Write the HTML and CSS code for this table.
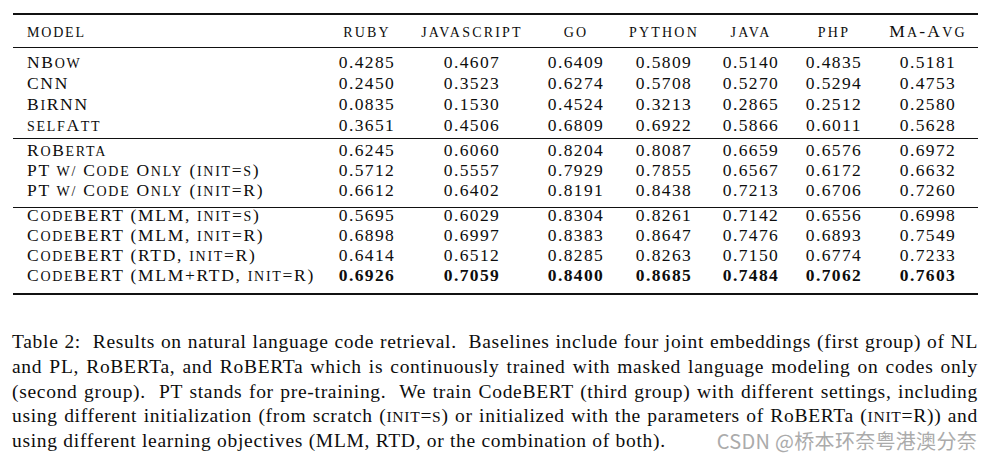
FILE: index.html
```html
<!DOCTYPE html>
<html lang="en">
<head>
<meta charset="utf-8">
<title>Table 2</title>
<link rel="stylesheet" href="styles.css">
</head>
<body>
<div class="page">
  <div class="table">
    <div class="row head">
      <div class="label"><span class="sc">model</span></div>
      <div class="num"><span class="sc">ruby</span></div>
      <div class="num"><span class="sc">javascript</span></div>
      <div class="num"><span class="sc">go</span></div>
      <div class="num"><span class="sc">python</span></div>
      <div class="num"><span class="sc">java</span></div>
      <div class="num"><span class="sc">php</span></div>
      <div class="num">M<span class="sc">a</span>-A<span class="sc">vg</span></div>
    </div>
    <div class="group g1">
      <div class="row">
        <div class="label">NB<span class="sc">ow</span></div>
        <div class="num">0.4285</div><div class="num">0.4607</div><div class="num">0.6409</div><div class="num">0.5809</div><div class="num">0.5140</div><div class="num">0.4835</div><div class="num">0.5181</div>
      </div>
      <div class="row">
        <div class="label">CNN</div>
        <div class="num">0.2450</div><div class="num">0.3523</div><div class="num">0.6274</div><div class="num">0.5708</div><div class="num">0.5270</div><div class="num">0.5294</div><div class="num">0.4753</div>
      </div>
      <div class="row">
        <div class="label">B<span class="sc">i</span>RNN</div>
        <div class="num">0.0835</div><div class="num">0.1530</div><div class="num">0.4524</div><div class="num">0.3213</div><div class="num">0.2865</div><div class="num">0.2512</div><div class="num">0.2580</div>
      </div>
      <div class="row">
        <div class="label"><span class="sc">self</span>A<span class="sc">tt</span></div>
        <div class="num">0.3651</div><div class="num">0.4506</div><div class="num">0.6809</div><div class="num">0.6922</div><div class="num">0.5866</div><div class="num">0.6011</div><div class="num">0.5628</div>
      </div>
    </div>
    <div class="group g2">
      <div class="row">
        <div class="label">R<span class="sc">o</span>B<span class="sc">erta</span></div>
        <div class="num">0.6245</div><div class="num">0.6060</div><div class="num">0.8204</div><div class="num">0.8087</div><div class="num">0.6659</div><div class="num">0.6576</div><div class="num">0.6972</div>
      </div>
      <div class="row">
        <div class="label">PT <span class="sc">w/</span> C<span class="sc">ode</span> O<span class="sc">nly</span> (<span class="sc">init</span>=<span class="sc">s</span>)</div>
        <div class="num">0.5712</div><div class="num">0.5557</div><div class="num">0.7929</div><div class="num">0.7855</div><div class="num">0.6567</div><div class="num">0.6172</div><div class="num">0.6632</div>
      </div>
      <div class="row">
        <div class="label">PT <span class="sc">w/</span> C<span class="sc">ode</span> O<span class="sc">nly</span> (<span class="sc">init</span>=R)</div>
        <div class="num">0.6612</div><div class="num">0.6402</div><div class="num">0.8191</div><div class="num">0.8438</div><div class="num">0.7213</div><div class="num">0.6706</div><div class="num">0.7260</div>
      </div>
    </div>
    <div class="group g3">
      <div class="row">
        <div class="label">C<span class="sc">ode</span>BERT (MLM, <span class="sc">init</span>=<span class="sc">s</span>)</div>
        <div class="num">0.5695</div><div class="num">0.6029</div><div class="num">0.8304</div><div class="num">0.8261</div><div class="num">0.7142</div><div class="num">0.6556</div><div class="num">0.6998</div>
      </div>
      <div class="row">
        <div class="label">C<span class="sc">ode</span>BERT (MLM, <span class="sc">init</span>=R)</div>
        <div class="num">0.6898</div><div class="num">0.6997</div><div class="num">0.8383</div><div class="num">0.8647</div><div class="num">0.7476</div><div class="num">0.6893</div><div class="num">0.7549</div>
      </div>
      <div class="row">
        <div class="label">C<span class="sc">ode</span>BERT (RTD, <span class="sc">init</span>=R)</div>
        <div class="num">0.6414</div><div class="num">0.6512</div><div class="num">0.8285</div><div class="num">0.8263</div><div class="num">0.7150</div><div class="num">0.6774</div><div class="num">0.7233</div>
      </div>
      <div class="row best">
        <div class="label">C<span class="sc">ode</span>BERT (MLM+RTD, <span class="sc">init</span>=R)</div>
        <div class="num">0.6926</div><div class="num">0.7059</div><div class="num">0.8400</div><div class="num">0.8685</div><div class="num">0.7484</div><div class="num">0.7062</div><div class="num">0.7603</div>
      </div>
    </div>
  </div>

  <p class="caption">
    <span class="line">Table 2:&nbsp; Results on natural language code retrieval.&nbsp; Baselines include four joint embeddings (first group) of NL</span>
    <span class="line">and PL, RoBERTa, and RoBERTa which is continuously trained with masked language modeling on codes only</span>
    <span class="line">(second group).&nbsp; PT stands for pre-training.&nbsp; We train CodeBERT (third group) with different settings, including</span>
    <span class="line">using different initialization (from scratch (<span class="sc">init</span>=<span class="sc">s</span>) or initialized with the parameters of RoBERTa (<span class="sc">init</span>=R)) and</span>
    <span class="line last">using different learning objectives (MLM, RTD, or the combination of both).</span>
  </p>

  <div class="watermark">CSDN @桥本环奈粤港澳分奈</div>
</div>
</body>
</html>
```

FILE: styles.css
```css
html, body {
  margin: 0;
  padding: 0;
  background: #ffffff;
}

body {
  font-family: "Liberation Serif", "Times New Roman", serif;
  color: #0d0d0d;
}

.page {
  position: relative;
  width: 992px;
  height: 460px;
  overflow: hidden;
}

.table {
  margin: 13px 0 0 13px;
  width: 965px;
  border-top: 2px solid #111;
  border-bottom: 2px solid #111;
  font-size: 17.5px;
  letter-spacing: 1.4px;
}

.row {
  display: grid;
  grid-template-columns: 323px 62px 148px 60px 116px 58px 108px 80px;
  line-height: 20px;
  white-space: nowrap;
}

.label {
  padding-left: 14px;
  letter-spacing: 1.7px;
}

.num {
  text-align: center;
}

.sc {
  text-transform: uppercase;
  font-size: 0.8em;
  line-height: 0;
}

.head {
  line-height: 32px;
  border-bottom: 1px solid #111;
  letter-spacing: 2.2px;
}

.head .label {
  letter-spacing: 1.8px;
}

.group {
  display: flex;
  flex-direction: column;
}

.g1 {
  padding: 4px 0 2px;
  border-bottom: 1px solid #111;
}

.g1 .row {
  line-height: 21px;
}

.g2 {
  padding: 1px 0 7px;
  border-bottom: 1px solid #111;
}

.g3 {
  margin-top: -3px;
  padding-bottom: 8px;
}

.best .num {
  font-weight: bold;
}

.caption {
  margin: 35px 0 0 12px;
  width: 966px;
  font-size: 19.5px;
  line-height: 24.8px;
  letter-spacing: 0.7px;
}

.line {
  display: block;
  text-align: justify;
  text-align-last: justify;
}

.line.last {
  text-align-last: left;
}

.watermark {
  position: absolute;
  right: 15px;
  top: 427px;
  font-family: "Noto Sans CJK SC", "Noto Sans", sans-serif;
  font-size: 20px;
  line-height: 28px;
  letter-spacing: 0.3px;
  color: #ababab;
  white-space: nowrap;
}
```
